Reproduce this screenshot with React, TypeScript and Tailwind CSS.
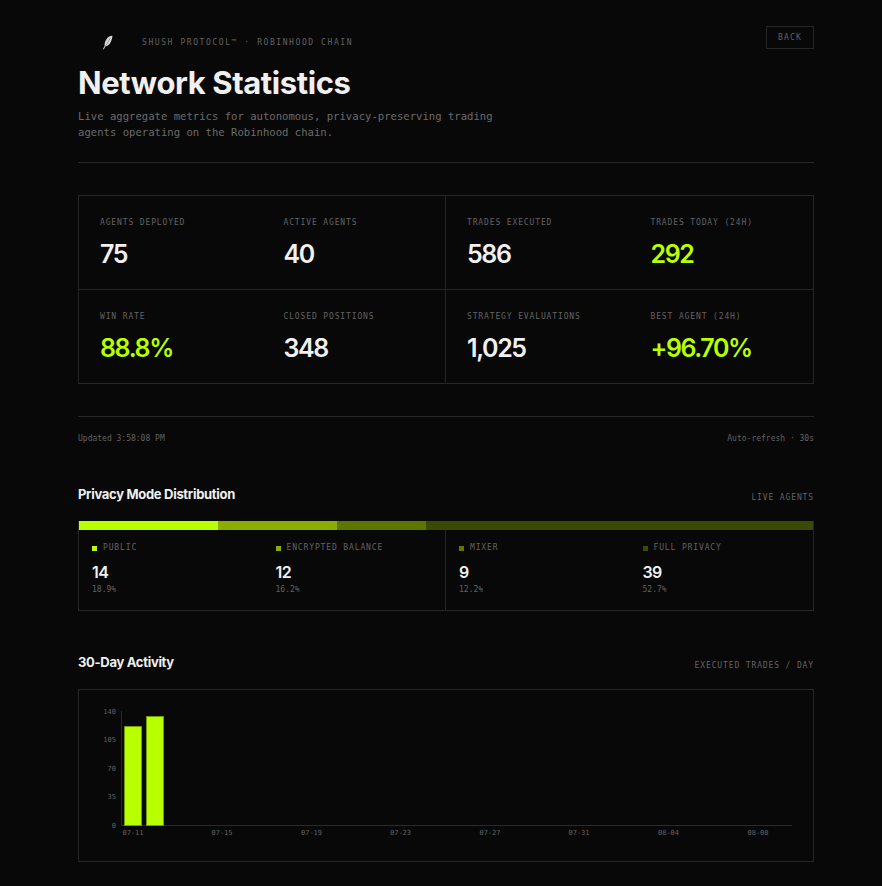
import React from 'react';

const mono = "font-['DejaVu_Sans_Mono',monospace]";
const display = "font-['Inter',sans-serif]";
const label = `${mono} text-[8px] leading-[12px] tracking-[0.87px] text-[#636363] uppercase`;

type Stat = { label: string; value: string; lime?: boolean };

const stats: Stat[] = [
  { label: 'Agents Deployed', value: '75' },
  { label: 'Active Agents', value: '40' },
  { label: 'Trades Executed', value: '586' },
  { label: 'Trades Today (24H)', value: '292', lime: true },
  { label: 'Win Rate', value: '88.8%', lime: true },
  { label: 'Closed Positions', value: '348' },
  { label: 'Strategy Evaluations', value: '1,025' },
  { label: 'Best Agent (24H)', value: '+96.70%', lime: true },
];

const modes = [
  { name: 'Public', count: 14, pct: 18.9, bar: 'bg-[#b8ff00]', dot: 'bg-[#b8ff00]' },
  { name: 'Encrypted Balance', count: 12, pct: 16.2, bar: 'bg-[#8aad00]', dot: 'bg-[#8aad00]' },
  { name: 'Mixer', count: 9, pct: 12.2, bar: 'bg-[#5c7600]', dot: 'bg-[#5c7600]' },
  { name: 'Full Privacy', count: 39, pct: 52.7, bar: 'bg-[#3a4a06]', dot: 'bg-[#3a4a06]' },
];

const yTicks = [
  { v: '140', y: 711 },
  { v: '105', y: 739 },
  { v: '70', y: 768 },
  { v: '35', y: 796 },
  { v: '0', y: 825 },
];

const xTicks = [
  { v: '07-11', x: 133 },
  { v: '07-15', x: 222 },
  { v: '07-19', x: 311.5 },
  { v: '07-23', x: 400.5 },
  { v: '07-27', x: 490 },
  { v: '07-31', x: 579 },
  { v: '08-04', x: 668.5 },
  { v: '08-08', x: 758 },
];

const ActivityChart = () => (
  <svg width="734" height="171" viewBox="79 690 734 171" className="block">
    <line x1="121.5" y1="711" x2="121.5" y2="825" stroke="#2a2a2a" />
    <line x1="121" y1="825.5" x2="792" y2="825.5" stroke="#2a2a2a" />
    <rect x="124.5" y="726.5" width="17" height="99" fill="#b8ff00" stroke="#6f9a00" />
    <rect x="146.5" y="716.5" width="17" height="109" fill="#b8ff00" stroke="#6f9a00" />
    {yTicks.map((t) => (
      <text key={t.v} x="116" y={t.y + 2.5} textAnchor="end" fontSize="7" fill="#636363" fontFamily="DejaVu Sans Mono, monospace">
        {t.v}
      </text>
    ))}
    {xTicks.map((t) => (
      <text key={t.v} x={t.x} y="835" textAnchor="middle" fontSize="7" fill="#636363" fontFamily="DejaVu Sans Mono, monospace">
        {t.v}
      </text>
    ))}
  </svg>
);

const Feather = () => (
  <svg width="11" height="15" viewBox="0 0 11 15" className="block">
    <path d="M10.4.8C8.4.6 6.2 1.8 4.6 4 3.2 6 2.4 8.4 2.6 11L1 14l.7.4 1.7-2.8c2-.4 3.8-1.8 5-3.8 1.2-2.2 2-4.6 2-7Z" fill="#d4d8d4" />
    <path d="M8.4 3 3.2 11.6" stroke="#777" strokeWidth="0.6" />
  </svg>
);

export default function App() {
  return (
    <div className="min-h-[886px] bg-[#080808] pl-[78px] pt-[26px] pb-[24px]">
      <div className="w-[736px]">
        {/* Header */}
        <div className="flex items-start justify-between h-[23px]">
          <div className="flex items-center pt-[9px]">
            <div className="w-[64px] flex justify-center pr-[6px]">
              <Feather />
            </div>
            <span className={`${mono} text-[8px] leading-[12px] tracking-[1.58px] text-[#636363]`}>
              SHUSH PROTOCOL™ · ROBINHOOD CHAIN
            </span>
          </div>
          <button className={`w-[48px] h-[23px] border border-[#262626] ${mono} text-[8px] tracking-[1.2px] text-[#636363]`}>
            BACK
          </button>
        </div>

        <h1 className={`${display} mt-[15px] text-[31px] leading-[38px] font-bold text-[#f0f0f0] tracking-[-0.4px]`}>
          Network Statistics
        </h1>
        <p className={`${mono} mt-[6px] text-[10.6px] leading-[16px] text-[#6b6b6b]`}>
          Live aggregate metrics for autonomous, privacy-preserving trading
          <br />
          agents operating on the Robinhood chain.
        </p>
        <div className="mt-[22px] border-t border-[#262626]" />

        {/* Stats */}
        <div className="mt-[32px] border border-[#262626] grid grid-cols-4">
          {stats.map((s, i) => (
            <div
              key={s.label}
              className={`pl-[21px] pt-[21px] ${i < 4 ? 'h-[94px] border-b border-[#262626]' : 'h-[93px]'} ${i % 4 === 1 ? 'border-r border-[#262626]' : ''}`}
            >
              <div className={label}>{s.label}</div>
              <div className={`${display} mt-[10px] text-[25px] leading-[30px] font-semibold tracking-[-1.4px] ${s.lime ? 'text-[#b8ff00]' : 'text-[#f0f0f0]'}`}>
                {s.value}
              </div>
            </div>
          ))}
        </div>

        <div className="mt-[32px] border-t border-[#262626]" />
        <div className={`${mono} mt-[16px] flex justify-between text-[8px] leading-[12px] text-[#636363]`}>
          <span>Updated 3:58:08 PM</span>
          <span>Auto-refresh · 30s</span>
        </div>

        {/* Privacy mode distribution */}
        <div className="mt-[38px] flex items-center justify-between h-[24px]">
          <h2 className={`${display} text-[13px] font-bold text-[#f0f0f0] tracking-[-0.3px]`}>Privacy Mode Distribution</h2>
          <span className={`${label} pt-[6px]`}>Live Agents</span>
        </div>
        <div className="mt-[14px] border border-t-0 border-[#262626]">
          <div className="flex h-[9px]">
            {modes.map((m) => (
              <div key={m.name} className={m.bar} style={{ width: `${m.pct}%` }} />
            ))}
          </div>
          <div className="grid grid-cols-4">
            {modes.map((m, i) => (
              <div key={m.name} className={`h-[80px] pl-[13px] pt-[12px] ${i === 1 ? 'border-r border-[#262626]' : ''}`}>
                <div className="flex items-center gap-[6px]">
                  <span className={`w-[5px] h-[5px] ${m.dot}`} />
                  <span className={label}>{m.name}</span>
                </div>
                <div className={`${display} mt-[8px] text-[16px] leading-[20px] font-semibold text-[#f0f0f0] tracking-[-0.6px]`}>
                  {m.count}
                </div>
                <div className={`${mono} mt-[2px] text-[8px] leading-[12px] text-[#636363]`}>{m.pct}%</div>
              </div>
            ))}
          </div>
        </div>

        {/* Activity */}
        <div className="mt-[40px] flex items-center justify-between h-[24px]">
          <h2 className={`${display} text-[13px] font-bold text-[#f0f0f0] tracking-[-0.3px]`}>30-Day Activity</h2>
          <span className={`${label} pt-[6px]`}>Executed Trades / Day</span>
        </div>
        <div className="mt-[14px] border border-[#262626]">
          <ActivityChart />
        </div>
      </div>
    </div>
  );
}
